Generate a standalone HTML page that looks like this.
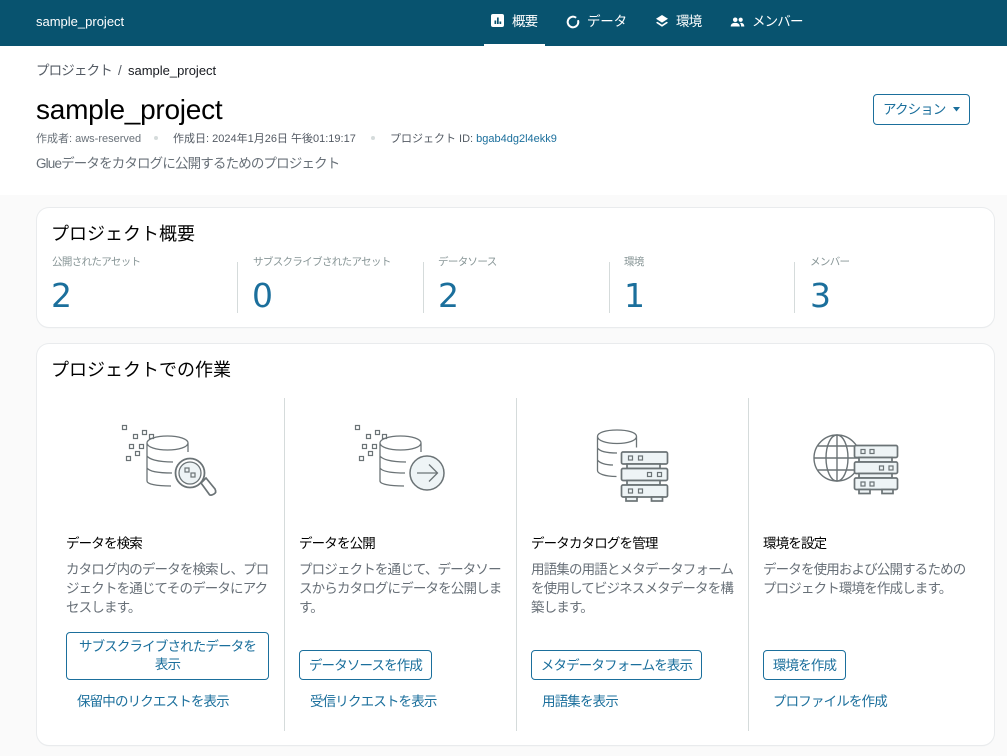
<!DOCTYPE html>
<html lang="ja"><head><meta charset="utf-8"><title>sample_project</title>
<style>
html,body{margin:0;padding:0}
body{width:1007px;height:756px;overflow:hidden;background:#fafafa;position:relative;font-family:"Liberation Sans","Noto Sans CJK JP",sans-serif;color:#16191f}
.t{position:absolute;white-space:nowrap;line-height:20px;font-size:13.5px;letter-spacing:-.85px;margin-top:1px}
.g{color:#687078}.l{color:#1b6f9c}.d{color:#16191f}
.h{font-size:18px;letter-spacing:0;color:#000}
.s{font-size:13.5px;letter-spacing:-.85px;color:#000}
.m{font-size:11px;letter-spacing:0;color:#545b64}
.card{position:absolute;left:37px;width:957px;background:#fff;border-radius:12px;box-shadow:0 0 0 1px #e9ebed,0 1px 1px #e3e6e8;box-sizing:border-box}
.v{position:absolute;width:1px;background:#d5dbdb}
.btn{position:absolute;box-sizing:border-box;border:1px solid #1b6f9c;border-radius:4px;background:#fff;color:#1b6f9c;text-align:center;font-size:13.5px;letter-spacing:-.85px;line-height:18px;white-space:nowrap}
.num{position:absolute;font-size:33px;line-height:40px;color:#1b6f9c;font-family:"DejaVu Sans",sans-serif}
.lab{position:absolute;white-space:nowrap;font-size:10.5px;line-height:14px;color:#879596;letter-spacing:-.65px;margin-top:1px}
svg{position:absolute;overflow:visible}
.ic{fill:none;stroke:#6b7376;stroke-width:1.3}
.f{fill:#eef4f6;stroke:#6b7376;stroke-width:1.7}
.sq{fill:none;stroke:#6b7376;stroke-width:1.2}
</style></head><body>
<div style="position:absolute;left:0;top:0;width:1007px;height:195px;background:#fff"></div>
<div style="position:absolute;left:0;top:0;width:1007px;height:46px;background:#08536f"></div>
<div class="t" style="left:36px;top:11px;color:#fff;font-size:13px;letter-spacing:0">sample_project</div>
<div style="position:absolute;left:484px;top:44px;width:61px;height:2px;background:#fff"></div>
<svg style="left:491px;top:14px" width="14" height="14" viewBox="0 0 14 14"><rect width="13" height="13" rx="2" fill="#fff"/><path d="M3.500 10V6.500h1.700V10zM6 10V3.500h1.700V10zM8.500 10V7.500h1.700V10z" fill="#08536f"/></svg>
<div class="t" style="left:512px;top:11px;color:#fff">概要</div>
<svg style="left:566px;top:15px" width="14" height="14" viewBox="0 0 14 14"><circle cx="7" cy="7" r="5.300" fill="none" stroke="#fff" stroke-width="2" stroke-dasharray="30 3.300" transform="rotate(-20 7 7)"/></svg>
<div class="t" style="left:587px;top:11px;color:#fff;letter-spacing:-.2px">データ</div>
<svg style="left:655px;top:14px" width="14" height="14" viewBox="0 0 14 14"><path d="M7 1l6 3.800L7 8.600 1 4.800z" fill="#fff"/><path d="M2.400 7.800L1 8.800l6 4 6-4-1.400-1L7 10.800z" fill="#fff"/></svg>
<div class="t" style="left:676px;top:11px;color:#fff">環境</div>
<svg style="left:730px;top:17px" width="15" height="10" viewBox="0 0 16 11"><circle cx="5.500" cy="3" r="2.500" fill="#fff"/><circle cx="11.500" cy="3" r="2.300" fill="#fff"/><path d="M0.500 10.500c0-3 2.500-4 5-4s5 1 5 4z" fill="#fff"/><path d="M11.500 6.500c2 0 4 1 4 4h-3.500c0-1.600-.2-3-1.500-3.900z" fill="#fff"/></svg>
<div class="t" style="left:752px;top:11px;color:#fff">メンバー</div>

<div class="t" style="left:36px;top:60px;color:#545b64">プロジェクト</div>
<div class="t" style="left:118px;top:60px;color:#545b64">/</div>
<div class="t d" style="left:128px;top:60px;font-size:13px;letter-spacing:0">sample_project</div>
<div class="t" style="left:36px;top:91px;font-size:28px;line-height:36px;letter-spacing:-.25px;color:#000">sample_project</div>
<div class="t m" style="left:36px;top:128px;color:#687078">作成者: aws-reserved</div>
<div style="position:absolute;left:154px;top:136px;width:4px;height:4px;border-radius:50%;background:#d5dbdb"></div>
<div class="t m" style="left:173px;top:128px">作成日: 2024年1月26日 午後01:19:17</div>
<div style="position:absolute;left:371px;top:136px;width:4px;height:4px;border-radius:50%;background:#d5dbdb"></div>
<div class="t m" style="left:390px;top:128px">プロジェクト ID: <span style="color:#1b6f9c">bgab4dg2l4ekk9</span></div>
<div class="t g" style="left:36px;top:153px">Glueデータをカタログに公開するためのプロジェクト</div>
<div class="btn" style="left:873px;top:94px;width:97px;height:31px;line-height:29px;text-align:left;padding-left:9px">アクション</div>
<svg style="left:953px;top:107px" width="8" height="5"><path d="M0 0h7L3.500 4.500z" fill="#1b6f9c"/></svg>

<div class="card" style="top:208px;height:119px"></div>
<div class="t h" style="left:51px;top:223px">プロジェクト概要</div>
<div class="lab" style="left:52px;top:254px">公開されたアセット</div><div class="num" style="left:51px;top:276px">2</div>
<div class="v" style="left:237px;top:262px;height:51px"></div>
<div class="lab" style="left:253px;top:254px">サブスクライブされたアセット</div><div class="num" style="left:252px;top:276px">0</div>
<div class="v" style="left:423px;top:262px;height:51px"></div>
<div class="lab" style="left:438px;top:254px">データソース</div><div class="num" style="left:438px;top:276px">2</div>
<div class="v" style="left:609px;top:262px;height:51px"></div>
<div class="lab" style="left:624px;top:254px">環境</div><div class="num" style="left:624px;top:276px">1</div>
<div class="v" style="left:794px;top:262px;height:51px"></div>
<div class="lab" style="left:810px;top:254px">メンバー</div><div class="num" style="left:810px;top:276px">3</div>

<div class="card" style="top:344px;height:401px"></div>
<div class="t h" style="left:51px;top:359px">プロジェクトでの作業</div>
<div class="v" style="left:284px;top:398px;height:333px"></div>
<div class="v" style="left:516px;top:398px;height:333px"></div>
<div class="v" style="left:748px;top:398px;height:333px"></div>

<!-- icon 1 -->
<svg style="left:100px;top:410px" width="130" height="100" viewBox="0 0 130 100">
<g class="sq"><rect x="22.500" y="15.500" width="4" height="4"/><rect x="33.500" y="24.500" width="4" height="4"/><rect x="42.500" y="20.500" width="4" height="4"/><rect x="49.500" y="24.500" width="4" height="4"/><rect x="29.500" y="34.500" width="4" height="4"/><rect x="39.500" y="34.500" width="4" height="4"/><rect x="35.500" y="41.500" width="4" height="4"/><rect x="26.500" y="46.500" width="4" height="4"/></g>
<path class="ic" d="M47 33c0-4 9-7 20.500-7s20.500 3 20.500 7-9 7-20.500 7-20.500-3-20.500-7zM88 33v9M47 33v38c0 3 9 5 24 5M47 46c2 3 10 6 26 6M47 58c2 3 10 5 25 5"/>
<path d="M101 73l5-5 9 11c1 2 1 4-1 5s-4 2-5 0z" fill="#fff" stroke="#6b7376" stroke-width="1.700"/>
<circle cx="90" cy="63" r="14.500" fill="#fff" stroke="#6b7376" stroke-width="1.800"/>
<circle cx="90" cy="63" r="11" fill="#eef4f6" stroke="#6b7376" stroke-width="1.300"/>
<rect x="85" y="58" width="4" height="4" class="sq"/><rect x="91" y="63" width="4" height="4" class="sq"/>
</svg>
<!-- icon 2 -->
<svg style="left:333px;top:410px" width="130" height="100" viewBox="0 0 130 100">
<g class="sq"><rect x="22.500" y="15.500" width="4" height="4"/><rect x="33.500" y="24.500" width="4" height="4"/><rect x="42.500" y="20.500" width="4" height="4"/><rect x="49.500" y="24.500" width="4" height="4"/><rect x="29.500" y="34.500" width="4" height="4"/><rect x="39.500" y="34.500" width="4" height="4"/><rect x="35.500" y="41.500" width="4" height="4"/><rect x="26.500" y="46.500" width="4" height="4"/></g>
<path class="ic" d="M47 33c0-4 9-7 20.500-7s20.500 3 20.500 7-9 7-20.500 7-20.500-3-20.500-7zM88 33v9M47 33v38c0 3 9 5 24 5M47 46c2 3 10 6 26 6M47 58c2 3 10 5 25 5"/>
<circle cx="94" cy="63" r="17" fill="#eef4f6" stroke="#6b7376" stroke-width="1.500"/>
<path d="M84 63h20M96 54.500l8.500 8.500-8.500 8.500" fill="none" stroke="#6b7376" stroke-width="1.300"/>
</svg>
<!-- icon 3 -->
<svg style="left:570px;top:410px" width="130" height="100" viewBox="0 0 130 100">
<path class="ic" d="M27.500 26.500c0-4 8.500-6.500 19.500-6.500s19.500 2.500 19.500 6.500-8.500 7-19.500 7-19.500-3-19.500-7zM66.500 26.500v11M27.500 26.500v34c0 3 7 6 19 6M27.500 38c2 3 8 5 19.500 5M27.500 50c2 3 8 5 15.500 5"/>
<rect x="51.500" y="42" width="46" height="12" rx="1.500" class="f"/>
<rect x="57" y="54" width="33" height="4.500" class="f"/>
<rect x="51.500" y="58.500" width="46" height="12" rx="1.500" class="f"/>
<rect x="57" y="70.500" width="33" height="4.500" class="f"/>
<rect x="51.500" y="75" width="46" height="12" rx="1.500" class="f"/>
<rect x="56" y="87" width="11" height="4" class="f"/><rect x="81.500" y="87" width="11" height="4" class="f"/>
<g class="sq"><rect x="58.500" y="46" width="4" height="4"/><rect x="68.500" y="46" width="4" height="4"/><rect x="77.500" y="62.500" width="4" height="4"/><rect x="87.500" y="62.500" width="4" height="4"/><rect x="58.500" y="79" width="4" height="4"/><rect x="68.500" y="79" width="4" height="4"/></g>
</svg>
<!-- icon 4 -->
<svg style="left:800px;top:410px" width="130" height="100" viewBox="0 0 130 100">
<g class="ic" style="stroke-width:1.400"><circle cx="37" cy="48" r="23"/><ellipse cx="37" cy="48" rx="11" ry="23"/><path d="M37 25v46M14 48h46M18 36h38M18 60h38"/></g>
<rect x="54.500" y="35.500" width="43" height="12" rx="1.500" class="f"/>
<rect x="59" y="47.500" width="33" height="4.500" class="f"/>
<rect x="54.500" y="52" width="43" height="11.500" rx="1.500" class="f"/>
<rect x="59" y="63.500" width="33" height="4.500" class="f"/>
<rect x="54.500" y="68" width="43" height="11.500" rx="1.500" class="f"/>
<rect x="59" y="79.500" width="11" height="4" class="f"/><rect x="82" y="79.500" width="11" height="4" class="f"/>
<g class="sq"><rect x="61" y="39.500" width="4" height="4"/><rect x="70" y="39.500" width="4" height="4"/><rect x="79.500" y="56" width="4" height="4"/><rect x="89" y="56" width="4" height="4"/><rect x="61" y="72" width="4" height="4"/><rect x="70" y="72" width="4" height="4"/></g>
</svg>

<div class="t s" style="left:66px;top:533px">データを検索</div>
<div class="t g" style="left:66px;top:559px">カタログ内のデータを検索し、プロ</div>
<div class="t g" style="left:66px;top:578px">ジェクトを通じてそのデータにアク</div>
<div class="t g" style="left:66px;top:597px">セスします。</div>
<div class="btn" style="left:66px;top:632px;width:203px;height:48px;padding-top:5px">サブスクライブされたデータを<br>表示</div>
<div class="t l" style="left:77px;top:691px">保留中のリクエストを表示</div>

<div class="t s" style="left:299px;top:533px">データを公開</div>
<div class="t g" style="left:299px;top:559px">プロジェクトを通じて、データソー</div>
<div class="t g" style="left:299px;top:578px">スからカタログにデータを公開しま</div>
<div class="t g" style="left:299px;top:597px">す。</div>
<div class="btn" style="left:299px;top:650px;width:133px;height:30px;line-height:29px">データソースを作成</div>
<div class="t l" style="left:310px;top:691px">受信リクエストを表示</div>

<div class="t s" style="left:531px;top:533px">データカタログを管理</div>
<div class="t g" style="left:531px;top:559px">用語集の用語とメタデータフォーム</div>
<div class="t g" style="left:531px;top:578px">を使用してビジネスメタデータを構</div>
<div class="t g" style="left:531px;top:597px">築します。</div>
<div class="btn" style="left:531px;top:650px;width:171px;height:30px;line-height:29px">メタデータフォームを表示</div>
<div class="t l" style="left:542px;top:691px">用語集を表示</div>

<div class="t s" style="left:763px;top:533px">環境を設定</div>
<div class="t g" style="left:763px;top:559px">データを使用および公開するための</div>
<div class="t g" style="left:763px;top:578px">プロジェクト環境を作成します。</div>
<div class="btn" style="left:763px;top:650px;width:83px;height:30px;line-height:29px">環境を作成</div>
<div class="t l" style="left:773px;top:691px">プロファイルを作成</div>
</body></html>
